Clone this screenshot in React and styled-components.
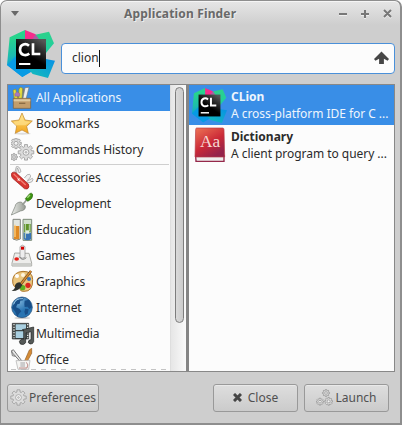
import React from "react";
import styled, { createGlobalStyle, css } from "styled-components";

const Global = createGlobalStyle`
  *{box-sizing:border-box}
  html,body{margin:0;padding:0;background:#fff}
  body{font:12px/18px "Noto Sans","Open Sans",sans-serif;color:#2b2b2b;overflow:hidden}
  svg{display:block;flex:none}
`;
const Window = styled.main`
  width:402px;height:425px;border:1px solid #8e8e8e;border-right-width:2px;border-bottom-width:2px;border-radius:7px 7px 0 0;
  background:linear-gradient(#e6e6e6,#cecece 24px);box-shadow:inset 0 1px #f5f5f5;
  display:flex;flex-direction:column;
`;
const TitleBar = styled.header`
  height:27px;flex:none;display:flex;align-items:center;padding:0 8px 2px 10px;
`;
const Title = styled.h1`
  flex:1;margin:0;padding-left:105px;font-size:12px;line-height:24px;font-weight:700;color:#696969;
  letter-spacing:.16px;text-shadow:1px 1px #eee;white-space:nowrap;
`;
const SearchRow = styled.div`
  height:56px;flex:none;display:flex;padding:2px 5px 0 6px;
`;
const SearchBox = styled.label`
  margin:13px 0 0 6px;width:334px;height:31px;display:flex;align-items:center;justify-content:space-between;
  padding:0 5px 1px 10px;border:1px solid #4a90d9;border-radius:4px;background:#fcfcfc;
`;
const Query = styled.span`
  display:flex;align-items:center;
`;
const Caret = styled.i`
  width:1px;height:17px;background:#111;
`;
const Panes = styled.section`
  height:288px;flex:none;margin:0 5px 0 6px;display:flex;border:1px solid #888;background:#fcfcfc;
`;
const Categories = styled.nav`
  width:162px;overflow:hidden;background:linear-gradient(90deg,#c4c4c4 5px,transparent 5px) 3px 284px/10px 1px repeat-x;
`;
const selected = css`background:#398ee7;color:#eef5fd;`;
const Category = styled.div`
  height:26px;display:flex;align-items:center;gap:1px;padding:0 0 1px 3px;white-space:nowrap;letter-spacing:-.05px;
  ${p => p.$on && selected}
`;
const Separator = styled.hr`
  height:1px;margin:1px 1px 0 2px;border:0;background:#cfcfcf;
`;
const ScrollTrack = styled.div`
  width:16px;padding:2px 0 0 4px;border-left:1px solid #dedede;background:linear-gradient(90deg,#e6e6e6,#fafafa);
`;
const ScrollThumb = styled.div`
  width:9px;height:236px;border:1px solid #7d7d7d;border-radius:5px;background:linear-gradient(90deg,#dadada,#cbcbcb);
`;
const Splitter = styled.div`
  width:3px;background:#858585;
`;
const Results = styled.div`
  flex:1;min-width:0;
`;
const Result = styled.div`
  height:40px;display:grid;grid-template-columns:35px 1fr;align-items:center;justify-items:start;padding-left:3px;column-gap:4px;
  line-height:17px;white-space:nowrap;letter-spacing:-.04px;
  ${p => p.$on && selected}
  b{display:block;font-weight:700;letter-spacing:0}
  & > svg{justify-self:center}
`;
const Footer = styled.footer`
  display:flex;padding:12px 11px 0 6px;
`;
const Button = styled.button`
  width:${p => p.$w}px;height:28px;padding:0 0 1px;display:flex;align-items:center;justify-content:center;gap:${p => p.$gap || 2}px;
  margin-left:${p => p.$ml || 0}px;border:1px solid #999;border-radius:3px;color:#505050;font:inherit;
  background:linear-gradient(#dedede,#cbcbcb);box-shadow:inset 0 1px #e9e9e9;
`;
const Spacer = styled.span`flex:1;`;

const CLionIcon = ({ size }) => (
  <svg width={size} height={size} viewBox="0 0 144 144">
    <defs>
      <linearGradient id="cl-left" x2=".2" y2="1"><stop offset=".2" stopColor="#27d48c" /><stop offset=".55" stopColor="#1cbcae" /><stop offset=".85" stopColor="#0696e8" /></linearGradient>
      <linearGradient id="cl-right" x2=".3" y2="1"><stop stopColor="#30d286" /><stop offset="1" stopColor="#1fce9f" /></linearGradient>
      <linearGradient id="cl-low" x1="1" x2="0" y2="1"><stop stopColor="#078fe8" /><stop offset="1" stopColor="#15c2b4" /></linearGradient>
      <linearGradient id="cl-box" x1=".8" x2=".3" y2=".8"><stop stopColor="#555" /><stop offset=".7" stopColor="#000" /></linearGradient>
    </defs>
    <path d="M8 22 54 0 80 40 76 124 46 141 0 105Z" fill="url(#cl-left)" />
    <path d="M0 105 27 78 76 120 46 141Z" fill="#079be4" />
    <path d="M78 16 126 5 141 40 112 75 70 45Z" fill="url(#cl-right)" />
    <path d="M54 0 86 13 78 35 54 30Z" fill="#f72d8b" />
    <path d="M86 13 96 28 74 31Z" fill="#a960a3" />
    <path d="M105 85 144 92 123 144 77 132 60 112Z" fill="url(#cl-low)" />
    <rect x="27" y="27" width="90" height="90" fill="url(#cl-box)" />
    <path d="M66 47c-9-8-27-6-27 12 0 17 17 20 28 12M78 40v32h22" fill="none" stroke="#fff" strokeWidth="8" />
    <path d="M36 99h34v6H36z" fill="#fff" />
  </svg>
);

const gearPath = (x, y, r) => {
  const pts = [];
  for (let i = 0; i < 8; i++) {
    const a = (i * Math.PI) / 4;
    [[-.28, .78], [-.19, 1.08], [.19, 1.08], [.28, .78]].forEach(([d, k]) =>
      pts.push(`${(x + Math.cos(a + d) * r * k).toFixed(1)} ${(y + Math.sin(a + d) * r * k).toFixed(1)}`));
  }
  return `M${pts.join("L")}Z`;
};
const Gear = ({ x, y, r }) => (
  <g fill="#dcdcdc" stroke="#999" strokeWidth="2.4" strokeLinejoin="round">
    <path d={gearPath(x, y, r)} />
    <circle cx={x} cy={y} r={r * .4} fill="#f3f3f3" />
    {r > 20 && <circle cx={x} cy={y} r={r * .12} strokeWidth="2" />}
  </g>
);

const art = {
  apps: <>
    <path d="m6 13 8-4 7 30H10z" fill="#e7df37" stroke="#8c8735" strokeWidth="2" />
    <path d="m24 8 5-4 6 3-2 31H22z" fill="#e2dc40" stroke="#908728" strokeWidth="2" />
    <path d="m11 23 7-6 9 6-1 8H12z" fill="#a67abd" stroke="#755487" />
    <path d="M36 6q5 9 12 0l-5 34h-8z" fill="#777" />
    <path d="m42 5 12-1-9 36H35z" fill="#eceeed" stroke="#757b79" strokeWidth="2" />
    <path d="M7 37h52v30H7z" fill="#c29d6b" stroke="#815d34" strokeWidth="2" />
    <path d="M8 40h50v6H8z" fill="#decaa0" /><path d="M24 50h19v4H24z" fill="#8a6c44" />
  </>,
  star: <>
    <ellipse cx="34" cy="65" rx="25" ry="3" fill="#ddd" />
    <path d="m33 3 9 21 22 3-17 16 5 21-19-10-20 10 4-22L1 27l23-3z" fill="url(#gold)" stroke="#bc832b" strokeWidth="2" strokeLinejoin="round" />
    <path d="m33 8 7 19 18 3-15 10H13L7 29l18-2z" fill="#ffe394" opacity=".65" />
  </>,
  gears: <><Gear x={15} y={16} r={15} /><Gear x={45} y={43} r={22} /><Gear x={9} y={57} r={10} /></>,
  knife: <>
    <path d="m11 22 5-20q10-3 14 15l-6 4Q22 7 19 6l-3 22zM40 36q9-14 16-11 8 7-7 18M47 46l17-9q5 3-2 11l-17 4" fill="#efefef" stroke="#929292" strokeWidth="2" />
    <path d="M1 23q4-8 15-2l36 33q5 10-3 15-9 2-15-7L5 37q-5-6-4-14z" fill="#d83631" stroke="#961918" strokeWidth="2" />
    <path d="m8 24 36 33" stroke="#f28075" strokeWidth="4" /><path d="m19 38 7 6M25 37l-4 7" stroke="white" strokeWidth="3" />
  </>,
  trowel: <>
    <path d="m31 30 12 12q2 13-15 15L1 69l11-25q2-14 19-14z" fill="url(#metal)" stroke="#767c74" strokeWidth="2" />
    <path d="m34 39 10-12q2-6 6-2" fill="none" stroke="#969b94" strokeWidth="5" />
    <path d="M43 20 56 5q8-4 9 4 1 12-15 19z" fill="#3d9411" stroke="#266607" strokeWidth="2" />
    <path d="m49 17 8-8" stroke="#a5d87d" strokeWidth="4" />
  </>,
  education: <>
    <path d="M6 4h22v59q-11 7-22 0z" fill="#e1e5df" stroke="#80857e" strokeWidth="3" />
    <path d="M9 24h16v38q-8 3-16 0z" fill="#df8a24" /><path d="M12 20v37" stroke="#ffd07e" strokeWidth="4" />
    <path d="M36 4h26v63H36z" fill="#d2dfce" stroke="#7b8b79" strokeWidth="3" />
    <path d="M39 18h20v25H39z" fill="#609429" /><path d="M38 44h22v20q-10 6-22 0z" fill="#3873b5" />
    <path d="M43 18v43M55 19v20" stroke="#bed6b2" strokeWidth="3" /><path d="M44 37h11v10H44z" fill="#e2edde" />
  </>,
  games: <>
    <path d="m11 27 43 1 8 29v9H3v-9z" fill="#ededeb" stroke="#a9aaa5" strokeWidth="3" />
    <path d="M4 57h57v8H4z" fill="#cccdca" /><path d="M27 38V8q7-9 15 0v32q-9 5-15 0z" fill="#eee" stroke="#888" strokeWidth="2" />
    <path d="M30 8h9v9h-9z" fill="#d20000" /><ellipse cx="17" cy="45" rx="7" ry="5" fill="#e41f18" />
    <path d="M25 38q8 14 21 3" fill="none" stroke="#777" strokeWidth="3" />
  </>,
  graphics: <>
    <path d="M5 29Q8 6 36 4q29 0 29 25 1 36-26 35-15 0-11-11Q3 57 5 29z" fill="#eac57e" stroke="#af762b" strokeWidth="3" />
    <circle cx="18" cy="18" r="6" fill="#fff" /><circle cx="36" cy="15" r="6" fill="#fff4dd" /><circle cx="54" cy="27" r="6" fill="#3b73b9" />
    <circle cx="51" cy="46" r="8" fill="#d9271f" /><circle cx="35" cy="53" r="8" fill="#5bb221" />
    <path d="M60 3 29 43" stroke="#6b4a26" strokeWidth="8" /><path d="M60 3 29 43" stroke="#df8d2f" strokeWidth="4" />
    <path d="m26 37 8 8Q25 64 2 63q12-6 10-17 4-9 14-9z" fill="#30332f" />
  </>,
  globe: <>
    <ellipse cx="34" cy="66" rx="24" ry="3" fill="#ccc" /><circle cx="33" cy="34" r="31" fill="url(#globe)" stroke="#204a76" strokeWidth="2" />
    <path d="M11 17q17-18 27-12l-2 8-8 1-2 9-7 2-4 9 10 4 6 8-7 7-5 10-7-17-9-10zM41 14l13-3q7 8 9 23l-8 5-5-7-9 1-1-9zM43 38l10 2-3 13-7 4-3-10z" fill="#184f89" />
    <path d="M8 25q6-19 28-17" fill="none" stroke="#9bc8e5" strokeWidth="3" />
  </>,
  media: <>
    <path d="M4 4h49v47H4z" fill="#3f4443" stroke="#292e2d" strokeWidth="2" /><path d="M14 7h31v17H14zM14 28h31v20H14z" fill="#a9cfe0" />
    <path d="M9 6v43M50 6v43" stroke="#e4e7e3" strokeWidth="4" strokeDasharray="4 4" />
    <path d="m34 23 34-8v44q-2 8-11 7-10-4-2-12l5-1V29l-16 4v29q-6 9-16 4-7-9 3-14h7V24z" fill="#555957" stroke="#202322" strokeWidth="2" />
  </>,
  office: <>
    <path d="m0 10 7-5 25 33-5 2z" fill="#e8e8e8" stroke="#777" strokeWidth="3" /><path d="m2 8 2 15 10 2" fill="none" stroke="#777" strokeWidth="3" />
    <path d="m62 1-7 5-17 39 6 4 18-33z" fill="#d58b35" stroke="#905d28" strokeWidth="2" />
    <path d="m15 38 42-1-4 27H21z" fill="#f4f4f2" stroke="#aaa" strokeWidth="2" /><path d="M24 60h24q6-10-2-17" fill="none" stroke="#a55b54" strokeWidth="2" /><path d="M28 42h14v15H28z" fill="#ccc" />
  </>,
};

const CategoryIcon = ({ name }) => (
  <svg width="24" height="24" viewBox="0 0 72 72">
    <defs>
      <linearGradient id="gold" x2="0" y2="1"><stop stopColor="#ffe27b" /><stop offset="1" stopColor="#f2a41e" /></linearGradient>
      <linearGradient id="metal"><stop stopColor="#eef0ed" /><stop offset="1" stopColor="#969b93" /></linearGradient>
      <radialGradient id="globe" cx=".35" cy=".2"><stop stopColor="#79afd8" /><stop offset="1" stopColor="#2874b2" /></radialGradient>
    </defs>
    {art[name]}
  </svg>
);

const DictionaryIcon = () => (
  <svg width="32" height="36" viewBox="0 0 96 108">
    <defs><linearGradient id="book" x2=".6" y2="1"><stop stopColor="#ee7555" /><stop offset=".6" stopColor="#cb2937" /><stop offset="1" stopColor="#94234b" /></linearGradient></defs>
    <path d="M3 83h89v22H4z" fill="#95284a" /><path d="M7 90h81v11H8z" fill="#eee" />
    <path d="M8 3h78q4 0 4 5l2 82H3L5 8q0-5 3-5z" fill="url(#book)" stroke="#b63b45" strokeWidth="2" />
    <text x="48" y="59" textAnchor="middle" fontFamily="Liberation Serif, serif" fontSize="52" fill="#f7d6d1">Aa</text>
  </svg>
);

const categories = [
  ["apps", "All Applications"], ["star", "Bookmarks"], ["gears", "Commands History"],
  ["knife", "Accessories"], ["trowel", "Development"], ["education", "Education"], ["games", "Games"],
  ["graphics", "Graphics"], ["globe", "Internet"], ["media", "Multimedia"], ["office", "Office"],
];

export default function App() {
  return (
    <>
      <Global />
      <Window>
        <TitleBar>
          <svg width="8" height="5" viewBox="0 0 8 5"><path d="M0 0h8L4 5z" fill="#696969" /></svg>
          <Title>Application Finder</Title>
          <svg width="54" height="10" viewBox="0 0 54 10" fill="none" strokeWidth="2">
            <path d="M1 6h8M23 6h8M27 2v8M46 2l7 7M53 2l-7 7" stroke="#eee" />
            <path d="M1 5h8M23 5h8M27 1v8M46 1l7 7M53 1l-7 7" stroke="#777" />
          </svg>
        </TitleBar>
        <SearchRow>
          <CLionIcon size={48} />
          <SearchBox>
            <Query>clion<Caret /></Query>
            <svg width="15" height="14" viewBox="0 0 15 14"><path d="M7.5.5 0 8l1.4 1.7 3.7-2V13h4.8V7.7l3.7 2L15 8z" fill="#464646" /></svg>
          </SearchBox>
        </SearchRow>
        <Panes>
          <Categories>
            {categories.map(([icon, label], i) => (
              <React.Fragment key={icon}>
                {i === 3 && <Separator />}
                <Category $on={i === 0}><CategoryIcon name={icon} />{label}</Category>
              </React.Fragment>
            ))}
          </Categories>
          <ScrollTrack><ScrollThumb /></ScrollTrack>
          <Splitter />
          <Results>
            <Result $on><CLionIcon size={35} /><div><b>CLion</b>A cross-platform IDE for C ...</div></Result>
            <Result><DictionaryIcon /><div><b>Dictionary</b>A client program to query ...</div></Result>
          </Results>
        </Panes>
        <Footer>
          <Button $w={92}><svg width="17" height="17" viewBox="0 0 54 54"><Gear x={27} y={27} r={23} /></svg>Preferences</Button>
          <Spacer />
          <Button $w={85} $gap={6}><svg width="9" height="9" viewBox="0 0 9 9"><path d="m1 1 7 7M8 1 1 8" stroke="#454545" strokeWidth="3" /></svg>Close</Button>
          <Button $w={85} $ml={6}><svg width="17" height="18" viewBox="0 0 51 54"><Gear x={30} y={12} r={10} /><Gear x={12} y={38} r={10} /><Gear x={38} y={37} r={11} /></svg>Launch</Button>
        </Footer>
      </Window>
    </>
  );
}
